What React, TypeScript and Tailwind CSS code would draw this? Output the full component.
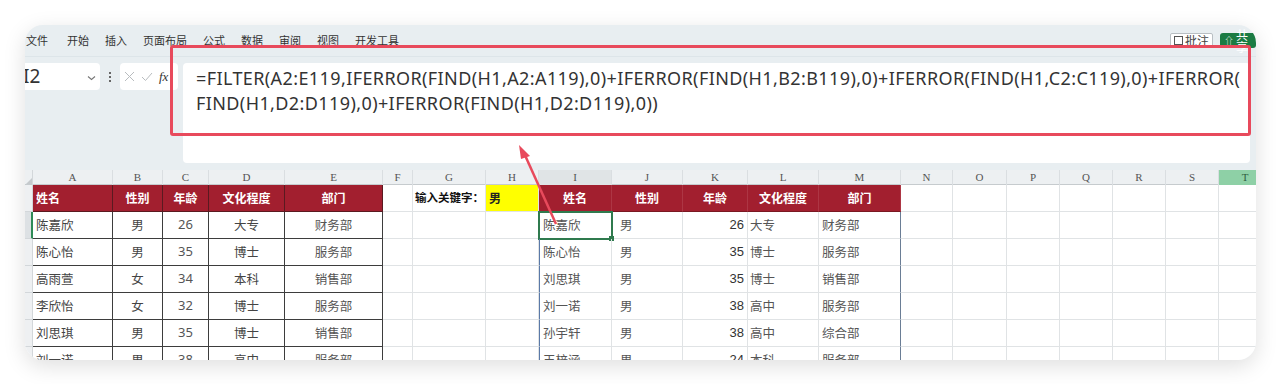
import React from "react";

const COLS =
  "grid grid-cols-[8px_80px_50px_46px_76px_98px_30px_73px_53px_73px_71px_65px_71px_82px_52px_54px_53px_53px_53px_53px_53px]";

const letters = ["A", "B", "C", "D", "E", "F", "G", "H", "I", "J", "K", "L", "M", "N", "O", "P", "Q", "R", "S", "T"];

const left = [
  ["陈嘉欣", "男", "26", "大专", "财务部"],
  ["陈心怡", "男", "35", "博士", "服务部"],
  ["高雨萱", "女", "34", "本科", "销售部"],
  ["李欣怡", "女", "32", "博士", "服务部"],
  ["刘思琪", "男", "35", "博士", "销售部"],
  ["刘一诺", "男", "38", "高中", "服务部"],
];

const right = [
  ["陈嘉欣", "男", "26", "大专", "财务部"],
  ["陈心怡", "男", "35", "博士", "服务部"],
  ["刘思琪", "男", "35", "博士", "销售部"],
  ["刘一诺", "男", "38", "高中", "服务部"],
  ["孙宇轩", "男", "38", "高中", "综合部"],
  ["王梓涵", "男", "24", "本科", "服务部"],
];

const heads = ["姓名", "性别", "年龄", "文化程度", "部门"];

const cjk = "font-['Noto_Sans_CJK_SC',sans-serif]";

function Menu() {
  const items = ["文件", "开始", "插入", "页面布局", "公式", "数据", "审阅", "视图", "开发工具"];
  return (
    <div className="h-[32px] flex items-center justify-between border-b border-[#dde5e9]">
      <div className={`flex items-center gap-[16px] pl-px text-[11px] text-[#333] ${cjk}`}>
        {items.map((t, i) => (
          <span key={t} className={i === 0 ? "mr-[3px]" : ""}>{t}</span>
        ))}
      </div>
      <div className={`flex items-center gap-[7px] text-[12px] ${cjk}`}>
        <div className="h-[15px] px-[3px] flex items-center gap-[2px] bg-white border border-[#b9bfc3] rounded-[2px] text-[#444] leading-none">
          <span className="w-[9px] h-[9px] border border-[#555]" />
          批注
        </div>
        <div className="h-[15px] w-[36px] pl-[4px] flex items-center gap-[2px] bg-[#1b7b43] rounded-[3px] text-white leading-none">
          <span className="text-[10px]">⇧</span>共享
        </div>
      </div>
    </div>
  );
}

function FormulaBar() {
  return (
    <div className="h-[110px] flex items-start pt-[6px] gap-[5px]">
      <div className="shrink-0 w-[75px] h-[27px] bg-white rounded-r-[4px] flex items-center justify-between pr-[4px]">
        <span className="text-[19px] text-[#333] font-['Noto_Sans',sans-serif] ml-[-2px] leading-none">I2</span>
        <svg width="9" height="6" viewBox="0 0 9 6" className="mt-[2px]">
          <path d="M1 1.5 L4.5 4.5 L8 1.5" stroke="#777" strokeWidth="1.1" fill="none" />
        </svg>
      </div>
      <div className="shrink-0 w-[10px] h-[27px] flex flex-col items-center justify-center gap-[2px]">
        <span className="w-[2px] h-[2px] bg-[#666]" />
        <span className="w-[2px] h-[2px] bg-[#666]" />
        <span className="w-[2px] h-[2px] bg-[#666]" />
      </div>
      <div className="shrink-0 w-[58px] h-[27px] bg-white rounded-[4px] flex items-center gap-[6px] pl-[4px]">
        <svg width="11" height="11" viewBox="0 0 11 11">
          <path d="M1 1 L10 10 M10 1 L1 10" stroke="#b8bcbf" strokeWidth="1" />
        </svg>
        <svg width="12" height="10" viewBox="0 0 12 10">
          <path d="M1 5 L4.5 8.5 L11 1" stroke="#b8bcbf" strokeWidth="1" fill="none" />
        </svg>
        <span className="text-[13px] italic font-['Liberation_Serif',serif] text-[#333] leading-none">fx</span>
      </div>
      <div className="flex-1 min-w-0 overflow-hidden mr-[6px] h-[100px] bg-white rounded-[4px] pl-[13px] pt-[3px] text-[18px] leading-[25px] text-[#333] font-['Noto_Sans',sans-serif] tracking-[0.4px] whitespace-nowrap">
        <div>=FILTER(A2:E119,IFERROR(FIND(H1,A2:A119),0)+IFERROR(FIND(H1,B2:B119),0)+IFERROR(FIND(H1,C2:C119),0)+IFERROR(</div>
        <div>FIND(H1,D2:D119),0)+IFERROR(FIND(H1,D2:D119),0))</div>
      </div>
    </div>
  );
}

function ColHeader() {
  return (
    <div className={`${COLS} h-[15px] bg-[#edf0f2] border-b border-[#c6cbce] text-[11px] leading-[15px] text-[#555] font-['Liberation_Serif',serif]`}>
      <div className="border-r border-[#d3d7da] flex items-end">
        <span className="w-0 h-0 border-l-[6px] border-l-transparent border-b-[6px] border-b-[#c5c9cc] ml-[1px] mb-[1px]" />
      </div>
      {letters.map((l) => (
        <div
          key={l}
          className={`text-center border-r border-[#dadee1] ${l === "I" ? "bg-[#e0e4e6]" : ""} ${l === "T" ? "bg-[#8ed0a6] text-[#2d5e3e]" : ""}`}
        >
          {l}
        </div>
      ))}
    </div>
  );
}

const dark = "border-r border-b border-[#3d3d3d]";
const light = "border-r border-b border-[#e0e3e5]";

function Blank({ n }: { n: number }) {
  return (
    <>
      {Array.from({ length: n }).map((_, i) => (
        <div key={i} className={light} />
      ))}
    </>
  );
}

function HeaderRow() {
  return (
    <div className={`${COLS} h-[27px] text-[12px] whitespace-nowrap ${cjk}`}>
      <div className="bg-[#eef0f2] border-r border-b border-[#d3d7da]" />
      {heads.map((h, i) => (
        <div
          key={h}
          className={`bg-[#a21f2f] text-white font-bold flex items-center ${i === 0 ? "pl-[3px]" : "justify-center"} border-r border-b border-[#5a1a20]`}
        >
          {h}
        </div>
      ))}
      <div className={light} />
      <div className={`${light} flex items-center justify-end pr-[1px] font-bold text-[#111] text-[11.5px] overflow-visible`}>输入关键字：</div>
      <div className="bg-[#ffff00] border-r border-b border-[#e0e3e5] flex items-center pl-[3px] font-bold text-[#222]">男</div>
      {heads.map((h) => (
        <div key={"r" + h} className="bg-[#a21f2f] text-white font-bold flex items-center justify-center border-b border-[#7a1822] border-r border-r-[#ad3644]">
          {h}
        </div>
      ))}
      <Blank n={7} />
    </div>
  );
}

function DataRow({ i }: { i: number }) {
  const l = left[i];
  const r = right[i];
  const sel = i === 0;
  return (
    <div className={`${COLS} h-[27px] text-[12.5px] whitespace-nowrap ${cjk}`}>
      <div className={`border-r border-b border-[#d3d7da] ${sel ? "bg-[#dde1e4] border-r-2 border-r-[#2e8b57]" : "bg-[#eef0f2]"}`} />
      <div className={`${dark} flex items-center pl-[3px] text-[#444]`}>{l[0]}</div>
      <div className={`${dark} flex items-center justify-center text-[#444]`}>{l[1]}</div>
      <div className={`${dark} flex items-center justify-center text-[#555] font-['Noto_Sans',sans-serif] text-[13px]`}>{l[2]}</div>
      <div className={`${dark} flex items-center justify-center text-[#444]`}>{l[3]}</div>
      <div className={`${dark} flex items-center justify-center text-[#555]`}>{l[4]}</div>
      <div className={light} />
      <div className={light} />
      <div className={light} />
      <div className={`relative border-l border-l-[#5b7aa8] border-r border-b border-[#e0e3e5] flex items-center pl-[3px] text-[#555] ${sel ? "outline-2 outline-[#2f7a4e] -outline-offset-1" : ""}`}>
        {r[0]}
        {sel && <span className="absolute right-[-3px] bottom-[-3px] w-[5px] h-[5px] bg-[#2f7a4e]" />}
      </div>
      <div className={`${light} flex items-center pl-[8px] text-[#555]`}>{r[1]}</div>
      <div className={`${light} flex items-center justify-end pr-[3px] text-[#333] font-['Liberation_Sans',sans-serif] text-[13px]`}>{r[2]}</div>
      <div className={`${light} flex items-center pl-[2px] text-[#555]`}>{r[3]}</div>
      <div className="border-r border-r-[#6a7d95] border-b border-b-[#e0e3e5] flex items-center pl-[3px] text-[#555]">{r[4]}</div>
      <Blank n={7} />
    </div>
  );
}

export default function App() {
  return (
    <div className="relative w-[1280px] h-[384px] bg-white overflow-hidden">
      <div className="ml-[25px] mt-[25px] w-[1231px] h-[335px] rounded-[18px] overflow-hidden bg-[#e8eef1] shadow-[0_6px_22px_rgba(0,0,0,0.13)]">
        <Menu />
        <FormulaBar />
        <div className="h-[3px]" />
        <div className="bg-white">
          <ColHeader />
          <HeaderRow />
          {left.map((_, i) => (
            <DataRow key={i} i={i} />
          ))}
        </div>
      </div>

      <div className="absolute left-[170px] top-[45px] w-[1081px] h-[91px] border-[3px] border-[#e84a5c] rounded-[3px]" />

      <svg className="absolute left-0 top-0" width="1280" height="384">
        <line x1="556" y1="224" x2="524" y2="153" stroke="#e84a5c" strokeWidth="2.5" />
        <path d="M519 145 L530 156 L521 159 Z" fill="#e84a5c" />
      </svg>
    </div>
  );
}
